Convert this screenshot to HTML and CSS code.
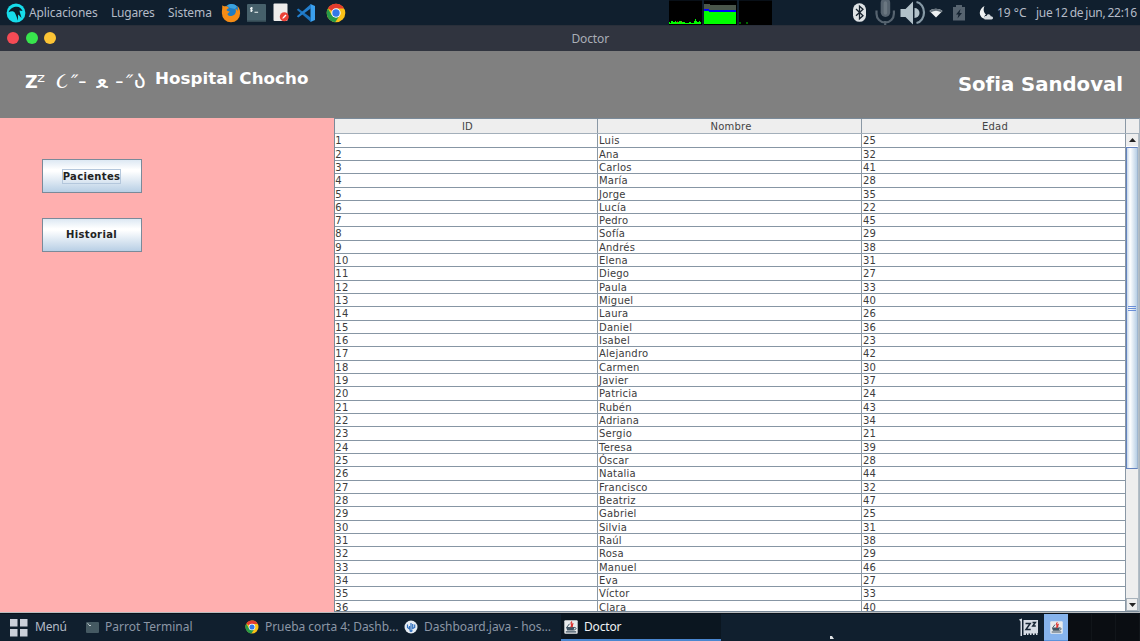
FILE: index.html
```html
<!DOCTYPE html>
<html lang="es">
<head>
<meta charset="utf-8">
<title>Doctor</title>
<link rel="stylesheet" href="styles.css">
</head>
<body>
<svg class="defs" width="0" height="0" aria-hidden="true">
  <symbol id="chrome" viewBox="0 0 20 20">
    <circle cx="10" cy="10" r="9.3" fill="#fbc116"/>
    <path d="M10 10 1.900 5.400A9.300 9.300 0 0 1 18.100 5.600H10z" fill="#e33b2e"/>
    <path d="M1.900 5.400A9.300 9.300 0 0 0 9.200 19.300L13.800 12.200 10 10 6 12.400z" fill="#269a48"/>
    <circle cx="10" cy="10" r="4.700" fill="#fff"/>
    <circle cx="10" cy="10" r="3.700" fill="#3478e6"/>
  </symbol>
  <symbol id="java" viewBox="0 0 14 14">
    <rect x=".3" y=".3" width="13.400" height="13.400" rx="1" fill="#e9ebec"/>
    <path d="M2 7h8.500l-1 3.500H3.200zM1.800 11.200h10.400v1.300H1.800z" fill="#3f5362"/>
    <path d="M9.800 7.500c3.200-.5 2.800 2.500-.3 2.500M3 7 5.500 3.800" fill="none" stroke="#3f5362"/>
    <path d="M8 1.500C5 4 9.600 4.200 6.800 7.300M9.300 3.300C7.500 4.700 9 5.300 8 7" fill="none" stroke="#dc3430" stroke-width="1.300"/>
  </symbol>
  <symbol id="term" viewBox="0 0 19 18">
    <rect width="19" height="18" rx="1" fill="#46606b"/>
    <rect y="16.500" width="19" height="1.500" fill="#334852"/>
    <path d="M5.800 4.200c-2-1-3 .5-1.500 1.200s1 2.200-1.200 1.300M4.500 3v5M7.500 8.200h3.600" fill="none" stroke="#eef3f4" stroke-width="1.100"/>
  </symbol>
</svg>

<nav class="panel">
  <svg class="parrot" width="20" height="20" viewBox="0 0 20 20">
    <circle cx="10" cy="10" r="9.400" fill="#16dcea"/>
    <path d="M2.500 9.200C4.500 5 7.500 3.600 11 3.700c2.600.1 4.200 1.600 5.600 4.300l-3.100-.6c.2 2.700 1.500 4.300 2 7.600-1.300-1.900-2.200-2.500-3.500-3.600-.2 2 .4 3.600-.3 6.300-.5-3.300-1.600-5-2.500-7.200-.5-1.300-1.500-2.100-2.700-2.200-1.400-.1-2.600.3-4 .9z" fill="#0b1b26"/>
  </svg>
  <span class="menu m1">Aplicaciones</span>
  <span class="menu m2">Lugares</span>
  <span class="menu m3">Sistema</span>
  <svg class="firefox" width="20" height="20" viewBox="0 0 20 20">
    <circle cx="10.500" cy="9" r="8" fill="#1d7cc4"/>
    <path d="M6 2.500C9 0 14 .5 16 3.500L14 6 9 5z" fill="#3ba2dd"/>
    <path d="M1.200 2.200C2 3 3 3.300 4.200 3.300 6 3 7.500 3.800 8 5.200c-1.500.3-2.200 1-2.400 2 .8 1 2.200 1 3.200 1.300-.8 1.500-2.500 1.600-2.200 3 1.500 2.500 5.300 1.700 7.200-.3 1.500-2 1.200-3.800.7-5.500 1.200.5 2 1.500 2.300 2.500C17 5 16.800 3.800 16 2.800c2 1.400 3.200 4.100 3.100 7.400a9.100 9.100 0 0 1-18.200 0C.7 7 1.500 5.800 1.200 2.200z" fill="#f48c16"/>
  </svg>
  <svg class="pterm" width="19" height="18"><use href="#term"/></svg>
  <svg class="editor" width="16" height="19" viewBox="0 0 16 19">
    <rect x=".5" y=".5" width="14" height="17.500" rx="1" fill="#eeedec"/>
    <circle cx="11.300" cy="13.800" r="4.500" fill="#ec4137"/>
    <path d="m9.300 15.800.5-1.600 2.700-2.600 1 1-2.700 2.700z" fill="#fff"/>
  </svg>
  <svg class="code" width="20" height="20" viewBox="0 0 20 20">
    <path d="M14.500 1 19 3v14l-4.500 2z" fill="#3ba0ee"/>
    <path d="M.8 6.800 2.300 5.500 15 14.700V19z" fill="#1b72bd"/>
    <path d="M.8 13.200 2.300 14.500 15 5.300V1z" fill="#237fce"/>
  </svg>
  <svg class="pchrome" width="20" height="20"><use href="#chrome"/></svg>

  <div class="monitors">
    <svg width="33" height="25" viewBox="0 0 33 25"><rect y=".5" width="33" height="24.500" fill="#000"/><path d="M0 24V22h1v1h1v-2h2v1h2v-1h1v1h3v-1h3v1h3v1h4v-1h2v1h3v-2h1v-2h1v2h1v1h2v-1h1v1h1v2z" fill="#0f0"/><path d="M8 22h1M12 22h1" stroke="#e6401a"/></svg>
    <svg width="33" height="25" viewBox="0 0 33 25"><rect y=".5" width="33" height="24.500" fill="#000"/><path d="M0 4h6v1h26v6H0z" fill="#4a564b"/><path d="M0 9h5v1h27v2H0z" fill="#0000ff"/><path d="M0 11h5v1h27v12H0z" fill="#0f0"/></svg>
    <svg width="33" height="25" viewBox="0 0 33 25"><rect y=".5" width="33" height="24.500" fill="#000"/><path d="M.5 22h1v2h-1zM7.500 22h1v2h-1z" fill="#0c0"/></svg>
  </div>

  <svg class="tray" width="113" height="25" viewBox="0 0 113 25">
    <rect x="0" y="3.300" width="13" height="18.500" rx="6.300" fill="#dfe3e6"/>
    <path d="m3 9 7 6.800-3.500 3V6.200L10 9.200 3 15.800" fill="none" stroke="#16222e" stroke-width="1.300"/>
    <g fill="none" stroke="#56636f"><path d="M23.500 10.500v3.300a8.700 8.700 0 0 0 17.400 0v-3.300M32.200 21v4" stroke-width="2.200"/></g>
    <rect x="27.700" y="-2" width="9.500" height="19" rx="4.700" fill="#56636f"/><path d="M32.400 3v10" stroke="#6b7781" stroke-width="3.500" stroke-linecap="round"/>
    <path d="M47.500 9h5l7.500-7.500v23L52.500 17h-5z" fill="#b2c1c9"/>
    <path d="M61.500 8a5 5 0 0 1 0 10z" fill="#b2c1c9"/>
    <path d="M63.500 2c4.500.8 7.500 5.500 7.500 10.500s-3 9.700-7.500 10.500" fill="none" stroke="#8699a5" stroke-width="2.200"/>
    <path d="M76.500 11C79.500 8 86 8 89.500 11L83 17.500z" fill="#eef1f2"/>
    <path d="M76.500 11C79.500 8 86 8 89.500 11L88 12.300Q83 9 78 12.300z" fill="#68747e"/>
    <path d="M100 7h3V5h6v2h3v13.500h-12z" fill="#56636f"/>
    <path d="m107.500 9-4.500 5.500h2.500L104.500 18.500 109 13h-2.500z" fill="#142230"/>
  </svg>
  <svg class="moon" width="15" height="16" viewBox="0 0 15 16"><path d="M5.500 1C1.500 3-.8 8 2 11.500c1 1.400 2.200 2 3.600 2C5 11.500 5.500 10.500 7 9.500 4.500 8 4 4 5.500 1z" fill="#f0f2f3"/><path d="M6 14.500c-2-1-1.200-4 1.500-3.500.5-2.500 4-2.200 4.200.3 2.800-.3 3 3.200.8 3.200z" fill="#d5dade"/></svg>
  <span class="menu temp">19 °C</span>
  <span class="menu clock">jue 12 de jun, 22:16</span>
</nav>

<div class="titlebar">
  <i class="dot red"></i><i class="dot green"></i><i class="dot yellow"></i>
  <span class="title">Doctor</span>
</div>

<header class="banner">
  <div class="brand">
    <div class="face"><b class="z">Z</b><span class="zz">ᶻ</span><span class="ear">૮</span><span class="prime">″</span><span class="dash">-</span><span class="nose">ﻌ</span><span class="dash">-</span><span class="prime">″</span><span class="geo">ა</span></div>
    <b class="hospital">Hospital Chocho</b>
  </div>
  <b class="user">Sofia Sandoval</b>
</header>

<main class="work">
  <aside class="side">
    <button class="btn"><span class="focus">Pacientes</span></button>
    <button class="btn"><span>Historial</span></button>
  </aside>
  <section class="scrollpane">
    <div class="head"><span>ID</span><span>Nombre</span><span>Edad</span><span class="corner"></span></div>
    <div class="view">
      <div class="rows" id="rows"></div>
      <div class="bar">
        <div class="arrow"><svg width="7" height="4" viewBox="0 0 7 4"><path d="M0 4 3.500 0 7 4z" fill="#222"/></svg></div>
        <div class="thumb"><i></i><i></i><i></i></div>
        <div class="track"></div>
        <div class="arrow end"><svg width="7" height="4" viewBox="0 0 7 4"><path d="M0 0h7L3.500 4z" fill="#222"/></svg></div>
      </div>
    </div>
  </section>
</main>

<footer class="taskbar">
  <svg class="grid" width="18" height="18" viewBox="0 0 18 18"><path d="M0 0h7.500v7.500H0zM10 0h7.500v7.500H10zM0 10h7.500v7.500H0zM10 10h7.500v7.500H10z" fill="#cbd0da"/></svg>
  <span class="menulabel">Menú</span>
  <span class="task t1"><svg width="13" height="11" viewBox="0 0 13 11"><rect width="13" height="11" rx="1" fill="#455962"/><path d="m1.500 1.500 1.500 1.200M3 3.500h2" stroke="#c5d0d3" fill="none"/></svg><span>Parrot Terminal</span></span>
  <span class="task t2"><svg width="14" height="14"><use href="#chrome"/></svg><span>Prueba corta 4: Dashb…</span></span>
  <span class="task t3"><svg width="14" height="14" viewBox="0 0 14 14"><circle cx="7" cy="7" r="6.500" fill="#e6edf4"/><path d="M3.500 4.500v3l2 1.500V6M7 3v8M5.500 10.500 7 11.500l1.500-1M8.700 4v4.500l2-1V4.500" fill="none" stroke="#2f6fbe" stroke-width="1.200"/></svg><span>Dashboard.java - hos…</span></span>
  <span class="task t4"><svg width="14" height="14"><use href="#java"/></svg><span>Doctor</span></span>
  <svg class="pointer" width="5" height="4" viewBox="0 0 5 4"><path d="M0 3V0h2l2 3z" fill="#e0e3e5"/></svg>
  <svg class="sleep" width="20" height="19" viewBox="0 0 20 19"><path d="M0 1.500 3 .5V18H1.500V3.500zM4.500 2H19v13h-.5v2H17v-1.500h-1.500V17H14v-1.500h-1.500V17H11v-1.500H9.500V17H8v-1.500H7V17H4.500z" fill="#d6dce4"/><path d="M6.500 5.500h4.700l-4.200 6h4.700M13.500 4.500h2.800l-2.500 3.500h3" fill="none" stroke="#182635" stroke-width="1.500"/></svg>
  <span class="active"><svg width="13" height="13"><use href="#java"/></svg></span>
  <span class="spaces"><i></i><i></i><i></i></span>
</footer>
<script src="rows.js"></script>
</body>
</html>
```
FILE: styles.css
```css
* { box-sizing: border-box; }
body { margin: 0; width: 1140px; height: 641px; overflow: hidden; display: flex; flex-direction: column; background: #101f2e; font-family: "DejaVu Sans", sans-serif; }
.defs { display: none; }
svg { display: block; flex: none; }

.panel { height: 25px; flex: none; display: flex; align-items: center; background: #101f2e; font-family: "Noto Sans", sans-serif; font-size: 12px; color: #b4bbc7; white-space: nowrap; }
.parrot { margin-left: 6px; }
.menu { line-height: 25px; flex: none; }
.m1 { width: 82px; margin-left: 3px; letter-spacing: -.1px; }
.m2 { width: 57px; letter-spacing: -.2px; }
.m3 { width: 53px; letter-spacing: -.1px; }
.firefox { margin-left: 0; }
.pterm { margin-left: 6px; }
.editor { margin-left: 7px; }
.code { margin-left: 7px; }
.pchrome { margin-left: 10px; }
.monitors { display: flex; gap: 2px; margin-left: 323px; }
.tray { margin-left: 81px; }
.moon { margin-left: 13px; }
.temp { margin-left: 3px; width: 39px; }
.clock { width: 104px; letter-spacing: -.25px; word-spacing: -.9px; }

.titlebar { height: 26px; flex: none; display: flex; align-items: center; gap: 6.500px; padding: 0 0 2px 7px; background: #30343f; font-family: "Noto Sans", sans-serif; font-size: 12px; color: #a9aeb7; border-top: 1px solid #292f3a; }
.dot { width: 12px; height: 12px; border-radius: 50%; }
.red { background: #f54b55; }
.green { background: #38e54d; }
.yellow { background: #fcc435; }
.title { flex: 1; text-align: center; padding: 2px 22px 0 0; letter-spacing: -.1px; }

.banner { height: 67px; flex: none; display: flex; justify-content: space-between; background: #808080; color: #fff; padding: 0 17px 0 25px; }
.brand { display: flex; white-space: nowrap; line-height: 20px; padding-top: 17px; }
.face { width: 130px; height: 24px; flex: none; display: flex; align-items: baseline; font-size: 19px; line-height: 24px; }
.face > * { flex: none; line-height: 24px; }
.z { width: 12px; font-size: 17.500px; }
.zz { width: 19px; font-size: 24px; transform: translateY(2px); }
.ear { width: 14px; font-size: 22px; }
.prime { width: 9px; font-size: 20px; transform: skewX(-12deg) translateY(1px); }
.dash { width: 9px; font-size: 20px; transform: scaleX(1.2); }
.nose { width: 28px; text-align: center; font-size: 23px; }
.geo { width: 14px; font-size: 23px; }
.hospital { font-size: 16.700px; letter-spacing: .06px; }
.user { font-size: 19.700px; line-height: 24px; padding-top: 22px; }

.work { height: 495px; flex: none; display: flex; border-bottom: 1px solid #b9bcbf; }
.side { width: 334px; flex: none; background: #ffafaf; padding: 41px 0 0 41.500px; display: flex; flex-direction: column; gap: 24.500px; }
.btn { width: 100px; height: 34px; padding: 0; display: flex; align-items: center; justify-content: center; border: 1px solid #7a8a99; border-radius: 0; background: linear-gradient(#dde8f3, #fff 30%, #fff 35%, #b8cfe5); font: bold 10px "DejaVu Sans", sans-serif; letter-spacing: .35px; color: #222; }
.focus { outline: 1px solid #b4c7dc; line-height: 13px; }

.scrollpane { width: 806px; display: flex; flex-direction: column; border: 1px solid #7a8a99; border-right-color: #a9b5bf; overflow: hidden; }
.head { height: 15.200px; flex: none; display: flex; background: #eee; font-size: 10px; line-height: 15px; letter-spacing: .22px; color: #444; text-align: center; border-bottom: 1px solid #a3afba; }
.head span { width: 264px; flex: none; border-right: 1px solid #8a98a5; padding-left: 3px; }
.head span:first-child { width: 263px; }
.head .corner { width: 14px; border: 0; }
.view { flex: 1; min-height: 0; display: flex; overflow: hidden; }
.rows { width: 791px; flex: none; background: #fff; }
.row { height: 13.343px; display: flex; border-bottom: 1px solid #8796a4; font-size: 10px; line-height: 13.800px; letter-spacing: .22px; color: #3c3c3c; }
.row span { width: 264px; flex: none; padding-left: 1px; border-right: 1px solid #8a98a5; height: 13.343px; }
.row span:first-child { width: 263px; padding-left: .3px; }
.bar { flex: 1; display: flex; flex-direction: column; background: #eee; border-right: 1px solid #b4bec6; }
.arrow { height: 13px; flex: none; display: flex; align-items: center; justify-content: center; border-bottom: 1px solid #fff; }
.end { border: 1px solid #a8b2bb; }
.thumb { height: 322px; flex: none; border: 1px solid #6382bf; border-right-color: #a0b7d0; background: linear-gradient(90deg, #c5d8ea, #fff 30%, #b8cfe5); display: flex; flex-direction: column; align-items: center; justify-content: center; gap: 1px; }
.thumb i { width: 8px; height: 1px; background: #6b8fd8; }
.track { flex: 1; }

.taskbar { height: 28px; flex: none; display: flex; align-items: center; background: #101f2e; font-family: "Noto Sans", sans-serif; font-size: 12px; color: #8b96a5; white-space: nowrap; border-top: 1px solid #08111b; }
.grid { margin-left: 10px; }
.menulabel { width: 51px; margin-left: 7px; color: #b4bbc7; flex: none; padding-bottom: 2px; letter-spacing: -.15px; }
.task { width: 159px; height: 27px; padding-bottom: 1px; display: flex; align-items: center; gap: 6px; flex: none; }
.task span { padding-bottom: 1px; }
.t2 { width: 159px; letter-spacing: -.05px; }
.t3 { width: 157px; letter-spacing: -.05px; }
.t4 { width: 160px; padding: 1px 0 0 3px; background: #0b1620; border-bottom: 2px solid #4a86cf; color: #f0f2f4; letter-spacing: -.15px; }
.pointer { margin: 20px 0 0 109px; }
.sleep { margin-left: 184px; }
.active { width: 24px; height: 27px; margin-left: 5px; display: flex; align-items: center; justify-content: center; background: #86b3ec; border-bottom: 1px solid #5b92da; }
.spaces { display: flex; flex: 1; height: 27px; background: #0a0d12; }
.spaces i { width: 24px; border-right: 1px solid #11151a; }
```
FILE: rows.js
```js
const people = [
  ["Luis", 25], ["Ana", 32], ["Carlos", 41], ["María", 28], ["Jorge", 35], ["Lucía", 22],
  ["Pedro", 45], ["Sofía", 29], ["Andrés", 38], ["Elena", 31], ["Diego", 27], ["Paula", 33],
  ["Miguel", 40], ["Laura", 26], ["Daniel", 36], ["Isabel", 23], ["Alejandro", 42], ["Carmen", 30],
  ["Javier", 37], ["Patricia", 24], ["Rubén", 43], ["Adriana", 34], ["Sergio", 21], ["Teresa", 39],
  ["Óscar", 28], ["Natalia", 44], ["Francisco", 32], ["Beatriz", 47], ["Gabriel", 25], ["Silvia", 31],
  ["Raúl", 38], ["Rosa", 29], ["Manuel", 46], ["Eva", 27], ["Víctor", 33], ["Clara", 40]
];
const rows = document.getElementById("rows");
people.forEach(([name, age], index) => {
  const row = document.createElement("div");
  row.className = "row";
  for (const value of [index + 1, name, age]) {
    const cell = document.createElement("span");
    cell.textContent = value;
    row.append(cell);
  }
  rows.append(row);
});
```
